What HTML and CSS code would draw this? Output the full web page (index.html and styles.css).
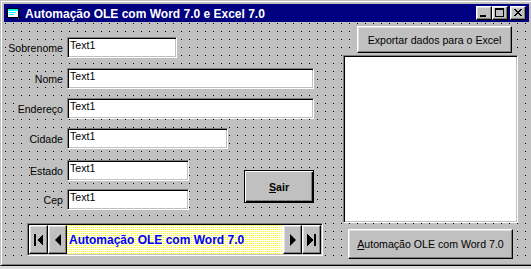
FILE: index.html
```html
<!DOCTYPE html>
<html lang="pt">
<head>
<meta charset="utf-8">
<title>Automação OLE com Word 7.0 e Excel 7.0</title>
<link rel="stylesheet" href="styles.css">
</head>
<body>
<div class="window">
  <div class="titlebar">
    <svg class="app-icon" width="16" height="16" viewBox="0 0 16 16" shape-rendering="crispEdges">
      <rect x="1" y="3" width="12" height="10" fill="#000"/>
      <rect x="2" y="4" width="10" height="2" fill="#00ffff"/>
      <rect x="2" y="6" width="10" height="6" fill="#ffffff"/>
      <rect x="3" y="7" width="7" height="1" fill="#00ffff"/>
      <rect x="3" y="9" width="5" height="1" fill="#00ffff"/>
      <rect x="13" y="12" width="2" height="2" fill="#000"/>
      <rect x="12" y="13" width="1" height="1" fill="#808080"/>
    </svg>
    <span class="title">Automação OLE com Word 7.0 e Excel 7.0</span>
    <div class="caption-btns">
      <button class="cap-btn" aria-label="Minimizar"><svg width="14" height="12" viewBox="0 0 14 12" shape-rendering="crispEdges"><rect x="3" y="8" width="6" height="2" fill="#000"/></svg></button>
      <button class="cap-btn" aria-label="Maximizar"><svg width="14" height="12" viewBox="0 0 14 12" shape-rendering="crispEdges"><path d="M2 1h9v2h-9z M2 3h1v6h-1z M10 3h1v6h-1z M2 9h9v1h-9z" fill="#000"/></svg></button>
      <button class="cap-btn close" aria-label="Fechar"><svg width="14" height="12" viewBox="0 0 14 12" shape-rendering="crispEdges"><path d="M3 2h2v1h-2z M4 3h2v1h-2z M5 4h2v1h-2z M6 5h2v1h-2z M7 6h2v1h-2z M8 7h2v1h-2z M9 8h2v1h-2z M9 2h2v1h-2z M8 3h2v1h-2z M7 4h2v1h-2z M5 6h2v1h-2z M4 7h2v1h-2z M3 8h2v1h-2z" fill="#000"/></svg></button>
    </div>
  </div>
  <div class="client">
    <div class="fields">
      <div class="row first"><div class="lbl"><span>Sobrenome</span></div><div class="tb w-sobrenome">Text1</div></div>
      <div class="row"><div class="lbl"><span>Nome</span></div><div class="tb w-long">Text1</div></div>
      <div class="row"><div class="lbl"><span>Endereço</span></div><div class="tb w-long">Text1</div></div>
      <div class="row"><div class="lbl"><span>Cidade</span></div><div class="tb w-cidade">Text1</div></div>
      <div class="lower">
        <div class="col">
          <div class="row"><div class="lbl"><span>Estado</span></div><div class="tb w-short">Text1</div></div>
          <div class="row"><div class="lbl"><span>Cep</span></div><div class="tb w-short">Text1</div></div>
        </div>
        <button class="btn default sair"><span><u>S</u>air</span></button>
      </div>
      <div class="data">
        <button class="nav" aria-label="Primeiro"><svg width="9" height="12" viewBox="0 0 9 12" shape-rendering="crispEdges"><rect x="0" y="0" width="2" height="12" fill="#000"/><path d="M3 6 L9 0 L9 12 Z" fill="#000"/></svg></button>
        <button class="nav" aria-label="Anterior"><svg width="6" height="12" viewBox="0 0 6 12"><path d="M0 6 L6 0 L6 12 Z" fill="#000"/></svg></button>
        <div class="caption">Automação OLE com Word 7.0</div>
        <button class="nav" aria-label="Próximo"><svg width="6" height="12" viewBox="0 0 6 12"><path d="M6 6 L0 0 L0 12 Z" fill="#000"/></svg></button>
        <button class="nav" aria-label="Último"><svg width="9" height="12" viewBox="0 0 9 12" shape-rendering="crispEdges"><path d="M6 6 L0 0 L0 12 Z" fill="#000"/><rect x="7" y="0" width="2" height="12" fill="#000"/></svg></button>
      </div>
    </div>
    <div class="side">
      <button class="btn exportar">Exportar dados para o Excel</button>
      <div class="list"></div>
      <button class="btn automacao"><span><u>A</u>utomação OLE com Word 7.0</span></button>
    </div>
  </div>
</div>
</body>
</html>
```
FILE: styles.css
```css
* { box-sizing: border-box; }
html, body { margin: 0; padding: 0; }
body {
  width: 531px;
  height: 269px;
  overflow: hidden;
  background: #dcdcdc;
  font-family: "Liberation Sans", Arial, sans-serif;
  font-size: 10.6px;
  color: #000;
}
.window {
  width: 533px;
  height: 266px;
  background: #c0c0c0;
  border: 1px solid;
  border-color: #c0c0c0 #000 #000 #c0c0c0;
  box-shadow: inset 1px 1px #fff, inset -1px -1px #808080;
  padding: 3px;
  display: flex;
  flex-direction: column;
}
.titlebar {
  height: 18px;
  flex: none;
  background: #000080;
  color: #fff;
  display: flex;
  align-items: center;
  padding: 0 3px 0 2px;
}
.app-icon { display: block; flex: none; }
.title {
  margin-left: 3px;
  font-weight: bold;
  font-size: 12px;
  line-height: 18px;
  padding-top: 1px;
  white-space: nowrap;
}
.caption-btns { margin-left: auto; display: flex; }
.cap-btn {
  width: 16px;
  height: 14px;
  padding: 0;
  background: #c0c0c0;
  border: 1px solid;
  border-color: #fff #000 #000 #fff;
  box-shadow: inset -1px -1px #808080, inset 1px 1px #dfdfdf;
  display: block;
}
.cap-btn svg { display: block; }
.cap-btn.close { margin-left: 2px; }

.client {
  margin-top: 1px;
  flex: 1;
  display: flex;
  background-color: #c0c0c0;
  background-image: conic-gradient(at 1px 1px, transparent 0deg 270deg, #000 270deg 360deg);
  background-size: 8px 8px;
  background-position: 1px 0;
}

.fields {
  display: flex;
  flex-direction: column;
  gap: 9px;
  padding-top: 14px;
}
.row { display: flex; align-items: center; height: 21px; }
.row.first { margin-bottom: 1px; }
.lbl {
  width: 59px;
  margin-right: 4px;
  display: flex;
  justify-content: flex-end;
  padding-top: 2px;
}
.lbl span { background: #c0c0c0; line-height: 13px; }
.tb {
  height: 21px;
  background: #fff;
  border: 1px solid;
  border-color: #808080 #fff #fff #808080;
  box-shadow: inset 1px 1px #000, inset -1px -1px #c0c0c0;
  padding: 1px 2px 0;
  line-height: 13px;
  white-space: nowrap;
}
.w-sobrenome { width: 110px; }
.w-long { width: 247px; }
.w-cidade { width: 161px; }
.w-short { width: 122px; }

.lower { display: flex; margin-top: 2px; }
.col { display: flex; flex-direction: column; gap: 8px; }

.btn {
  background: #c0c0c0;
  border: 1px solid;
  border-color: #fff #000 #000 #fff;
  box-shadow: inset -1px -1px #808080, inset 1px 1px #dfdfdf;
  font: inherit;
  color: #000;
  padding: 0;
  display: flex;
  align-items: center;
  justify-content: center;
  white-space: nowrap;
}
.btn.default {
  border-color: #000;
  box-shadow: inset 1px 1px #fff, inset -1px -1px #000, inset -2px -2px #808080;
}
.sair {
  width: 70px;
  height: 33px;
  margin-left: 55px;
  margin-top: 10px;
  font-weight: bold;
}
.sair span { padding-top: 1px; }

.data {
  display: flex;
  width: 296px;
  height: 33px;
  margin-left: 23px;
  margin-top: 4px;
  border: 1px solid;
  border-color: #808080 #fff #fff #808080;
  box-shadow: inset 1px 1px #000, inset -1px -1px #c0c0c0;
  padding: 1px;
}
.nav {
  width: 19px;
  flex: none;
  padding: 0;
  background: #c0c0c0;
  border: 1px solid;
  border-color: #fff #000 #000 #fff;
  box-shadow: inset -1px -1px #808080, inset 1px 1px #dfdfdf;
  display: flex;
  align-items: center;
  justify-content: center;
}
.nav svg { display: block; margin-top: 1px; }
.caption {
  flex: 1;
  display: flex;
  align-items: center;
  padding-left: 2px;
  padding-top: 1px;
  color: #0000ff;
  font-weight: bold;
  font-size: 12px;
  white-space: nowrap;
  background-color: #fff;
  background-image: conic-gradient(at 1px 1px, #fff 0deg 270deg, #ffff00 270deg 360deg);
  background-size: 2px 2px;
}

.side {
  margin-left: auto;
  margin-right: 11px;
  width: 175px;
  display: flex;
  flex-direction: column;
  padding-top: 3px;
}
.exportar {
  width: 155px;
  height: 27px;
  margin-left: 14px;
}
.list {
  margin-top: 2px;
  height: 168px;
  background: #fff;
  border: 1px solid;
  border-color: #808080 #fff #fff #808080;
  box-shadow: inset 1px 1px #000, inset -1px -1px #c0c0c0;
}
.automacao {
  width: 165px;
  height: 30px;
  margin-top: 6px;
  margin-left: 5px;
}
```
